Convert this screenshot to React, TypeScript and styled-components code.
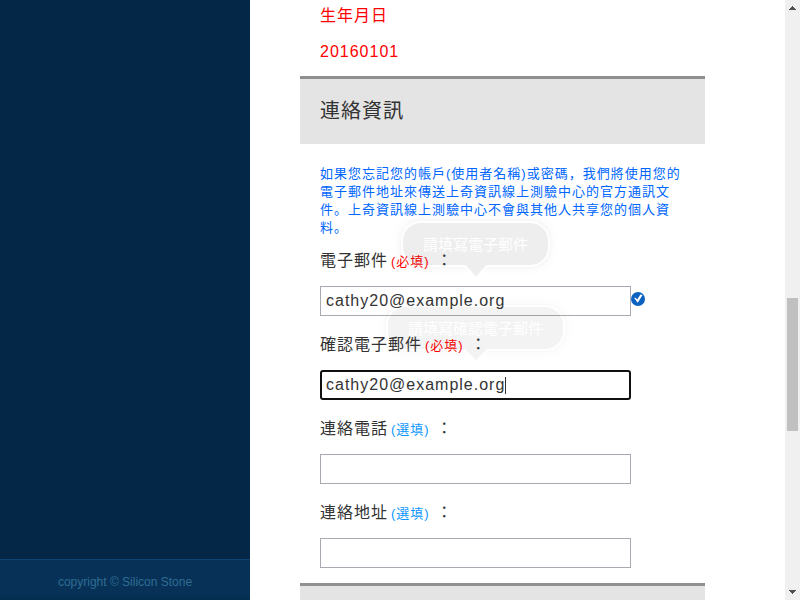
import React from 'react';
import styled, { createGlobalStyle } from 'styled-components';

const GlobalStyle = createGlobalStyle`
  * { box-sizing: border-box; }
  body {
    margin: 0;
    overflow: hidden;
    background: #fff;
    color: #333;
    font-family: "Liberation Sans", "Noto Sans CJK JP", sans-serif;
    font-size: 16px;
    letter-spacing: 1px;
  }
`;

const Page = styled.div`
  display: flex;
  width: 800px;
  height: 600px;
  overflow: hidden;
`;

const Sidebar = styled.aside`
  display: flex;
  flex-direction: column;
  justify-content: flex-end;
  width: 250px;
  background: #042747;
`;

const Copyright = styled.footer`
  height: 41px;
  padding-top: 4px;
  border-top: 1px solid #0f4472;
  background: linear-gradient(#073157 0, #073157 34px, #052d50 40px);
  color: #2f6d94;
  font-size: 12px;
  letter-spacing: 0;
  line-height: 36px;
  text-align: center;
`;

const Main = styled.main`
  flex: 1;
  padding-left: 50px;
`;

const Content = styled.div`
  width: 405px;
`;

const Birth = styled.section`
  height: 76px;
  padding: 4px 20px 0;
  color: #f00;
`;

const BirthLine = styled.div`
  height: 36px;
  line-height: 24px;
`;

const SectionTitle = styled.h2`
  height: 68px;
  margin: 0;
  padding: 0 20px;
  border-top: 3px solid #8f8f8f;
  background: #e4e4e4;
  font-size: 20px;
  font-weight: 400;
  line-height: 65px;
`;

const Contact = styled.section`
  height: 439px;
  padding: 21px 20px 0;
`;

const Notice = styled.p`
  margin: 0;
  color: #06f;
  font-size: 13px;
  line-height: 18px;
`;

const Field = styled.div`
  position: relative;
  height: 84px;
  padding-top: 12px;
`;

const Label = styled.label`
  display: block;
  height: 37px;
  line-height: 24px;
  white-space: pre;
`;

const Mark = styled.span<{ $required?: boolean }>`
  margin: 0 1px 0 3px;
  color: ${(p) => (p.$required ? '#f00' : '#0c96ff')};
  font-size: 13px;
`;

const InputRow = styled.div`
  display: flex;
  align-items: flex-start;
`;

const InputBox = styled.div<{ $focused?: boolean }>`
  display: flex;
  align-items: center;
  width: 311px;
  height: 30px;
  padding: 0 ${(p) => (p.$focused ? 4 : 5)}px;
  border: ${(p) => (p.$focused ? '2px solid #101010' : '1px solid #a9a9b1')};
  border-radius: ${(p) => (p.$focused ? 3 : 0)}px;
  background: #fff;
  line-height: 18px;
`;

const Caret = styled.i`
  width: 1px;
  height: 17px;
  background: #333;
`;

const CheckIcon = styled.svg`
  width: 14px;
  height: 14px;
  margin-top: 6px;
`;

const Tip = styled.div<{ $left: number; $opacity: number }>`
  position: absolute;
  z-index: 2;
  top: -16px;
  left: ${(p) => p.$left}px;
  display: flex;
  flex-direction: column;
  align-items: center;
  opacity: ${(p) => p.$opacity};
  pointer-events: none;
`;

const Bubble = styled.div`
  height: 46px;
  padding: 0 20px;
  border: 2px solid #fff;
  border-radius: 20px;
  background: #333;
  box-shadow: 0 0 6px #333;
  color: #fff;
  font-size: 15px;
  letter-spacing: 0;
  line-height: 43px;
  white-space: nowrap;
`;

const Arrow = styled.svg`
  width: 30px;
  height: 15px;
  margin-top: -3px;
`;

type TipData = { text: string; left: number; opacity: number };

function Tooltip({ text, left, opacity }: TipData) {
  return (
    <Tip $left={left} $opacity={opacity}>
      <Bubble>{text}</Bubble>
      <Arrow viewBox="0 0 30 15">
        <path d="M3 0h24L15 13Z" fill="#333" />
        <path d="M2 2h2L15 14 26 2h2" fill="none" stroke="#fff" strokeWidth="2" />
      </Arrow>
    </Tip>
  );
}

const ScrollBar = styled.div`
  display: flex;
  flex-direction: column;
  align-items: center;
  width: 15px;
  background: #f0f0f0;
`;

const ScrollArrow = styled.svg`
  width: 7px;
  height: 4px;
  margin-top: 6px;
`;

const Thumb = styled.div`
  width: 11px;
  height: 133px;
  margin: 288px 0 153px;
  background: #c0c0c0;
`;

type FieldData = {
  label: string;
  required?: boolean;
  value?: string;
  focused?: boolean;
  valid?: boolean;
  tip?: TipData;
};

const fields: FieldData[] = [
  {
    label: '電子郵件',
    required: true,
    value: 'cathy20@example.org',
    valid: true,
    tip: { text: '請填寫電子郵件', left: 81, opacity: 0.08 },
  },
  {
    label: '確認電子郵件',
    required: true,
    value: 'cathy20@example.org',
    focused: true,
    tip: { text: '請填寫確認電子郵件', left: 66, opacity: 0.053 },
  },
  { label: '連絡電話' },
  { label: '連絡地址' },
];

export default function App() {
  return (
    <Page>
      <GlobalStyle />
      <Sidebar>
        <Copyright>copyright © Silicon Stone</Copyright>
      </Sidebar>
      <Main>
        <Content>
          <Birth>
            <BirthLine>生年月日</BirthLine>
            <BirthLine>20160101</BirthLine>
          </Birth>
          <SectionTitle>連絡資訊</SectionTitle>
          <Contact>
            <Notice>
              如果您忘記您的帳戶(使用者名稱)或密碼，我們將使用您的電子郵件地址來傳送上奇資訊線上測驗中心的官方通訊文件。上奇資訊線上測驗中心不會與其他人共享您的個人資料。
            </Notice>
            {fields.map((f) => (
              <Field key={f.label}>
                <Label>
                  {f.label}
                  <Mark $required={f.required}>{f.required ? '(必填)' : '(選填)'}</Mark>
                  {' ：'}
                </Label>
                <InputRow>
                  <InputBox $focused={f.focused}>
                    {f.value}
                    {f.focused && <Caret />}
                  </InputBox>
                  {f.valid && (
                    <CheckIcon viewBox="0 0 14 14">
                      <circle cx="7" cy="7" r="7" fill="#0a62c0" />
                      <path d="M3 5.8 5 6 6.2 7.6 9.4 2.6 11.6 3 6.7 10.8Z" fill="#fff" />
                    </CheckIcon>
                  )}
                </InputRow>
                {f.tip && <Tooltip {...f.tip} />}
              </Field>
            ))}
          </Contact>
          <SectionTitle />
        </Content>
      </Main>
      <ScrollBar>
        <ScrollArrow viewBox="0 0 7 4" shapeRendering="crispEdges">
          <path d="M3 0h1v1h1v1h1v1h1v1H0V3h1V2h1V1h1Z" fill="#505050" />
        </ScrollArrow>
        <Thumb />
        <ScrollArrow viewBox="0 0 7 4" shapeRendering="crispEdges">
          <path d="M0 0h7v1H6v1H5v1H4v1H3V3H2V2H1V1H0Z" fill="#505050" />
        </ScrollArrow>
      </ScrollBar>
    </Page>
  );
}
